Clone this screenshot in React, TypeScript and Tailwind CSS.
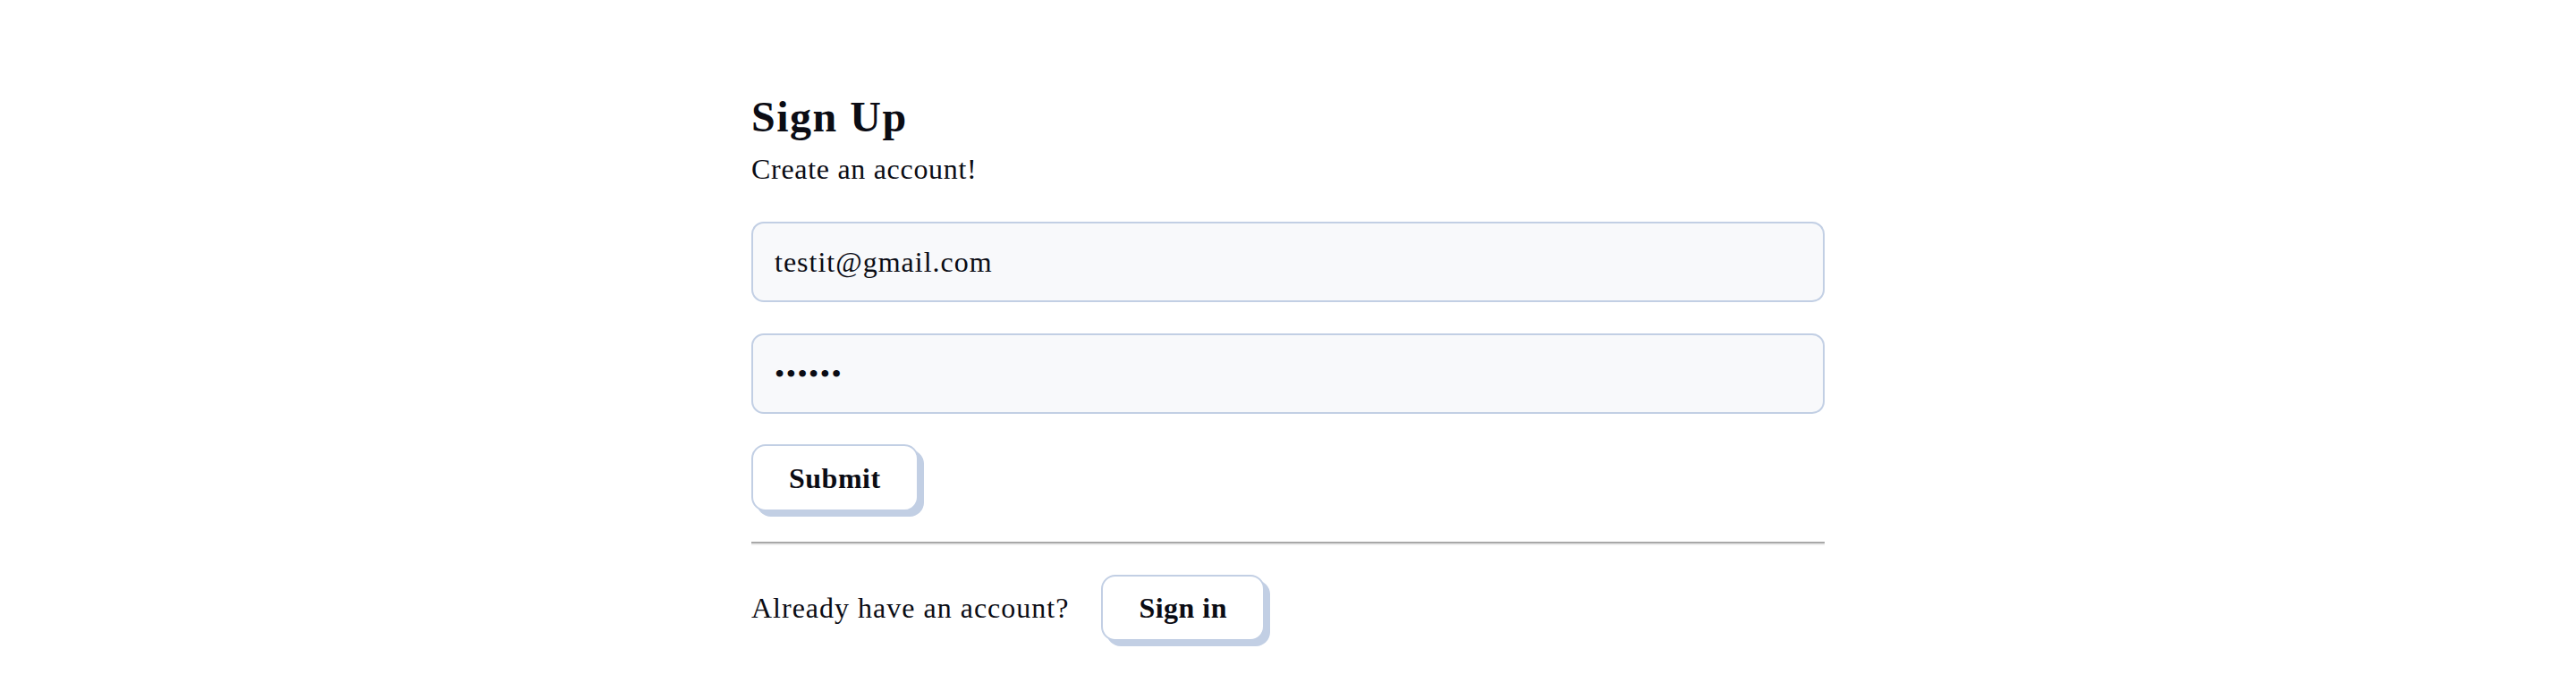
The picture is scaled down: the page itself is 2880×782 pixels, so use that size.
import React from "react";

const serif = { fontFamily: '"Liberation Serif", "Times New Roman", serif' };

export default function App() {
  return (
    <div className="min-h-[782px] w-full bg-white text-[#0b0c14]" style={serif}>
      <div className="mx-auto flex w-[1200px] flex-col pt-[103px]">
        <h1 className="text-[48px] font-bold leading-[56px] tracking-[1.5px]">Sign Up</h1>
        <p className="mt-[6px] text-[32px] leading-[48px] tracking-[0.7px]">Create an account!</p>
        <form className="mt-[35px] flex flex-col" onSubmit={(e) => e.preventDefault()}>
          <input
            type="email"
            defaultValue="testit@gmail.com"
            className="h-[90px] w-full rounded-[14px] border-2 border-[#c2cfe4] bg-[#f8f9fb] px-6 text-[32px] tracking-[1px] text-[#0b0c14] outline-none"
            style={serif}
          />
          <input
            type="password"
            defaultValue="123456"
            className="mt-[35px] h-[90px] w-full rounded-[14px] border-2 border-[#c2cfe4] bg-[#f8f9fb] px-6 text-[32px] tracking-[1.5px] text-[#0b0c14] outline-none"
            style={serif}
          />
          <div className="mt-[34px] flex">
            <button
              type="submit"
              className="h-[75px] rounded-[16px] border-2 border-[#c2cfe4] bg-white px-10 text-[32px] font-bold tracking-[0.5px] text-[#0b0c14] shadow-[6px_6px_0_0_#c2cfe4]"
            >
              Submit
            </button>
          </div>
        </form>
        <div className="mt-[34px] h-[4px] w-full border-t-2 border-b-2 border-t-[#a8a8a8] border-b-[#ededed]" />
        <div className="mt-[33px] flex items-center">
          <span className="text-[32px] leading-[48px] tracking-[1px]">Already have an account?</span>
          <button
            type="button"
            className="ml-9 h-[74px] rounded-[16px] border-2 border-[#c2cfe4] bg-white px-10 text-[32px] font-bold tracking-[0.5px] text-[#0b0c14] shadow-[6px_6px_0_0_#c2cfe4]"
          >
            Sign in
          </button>
        </div>
      </div>
    </div>
  );
}
